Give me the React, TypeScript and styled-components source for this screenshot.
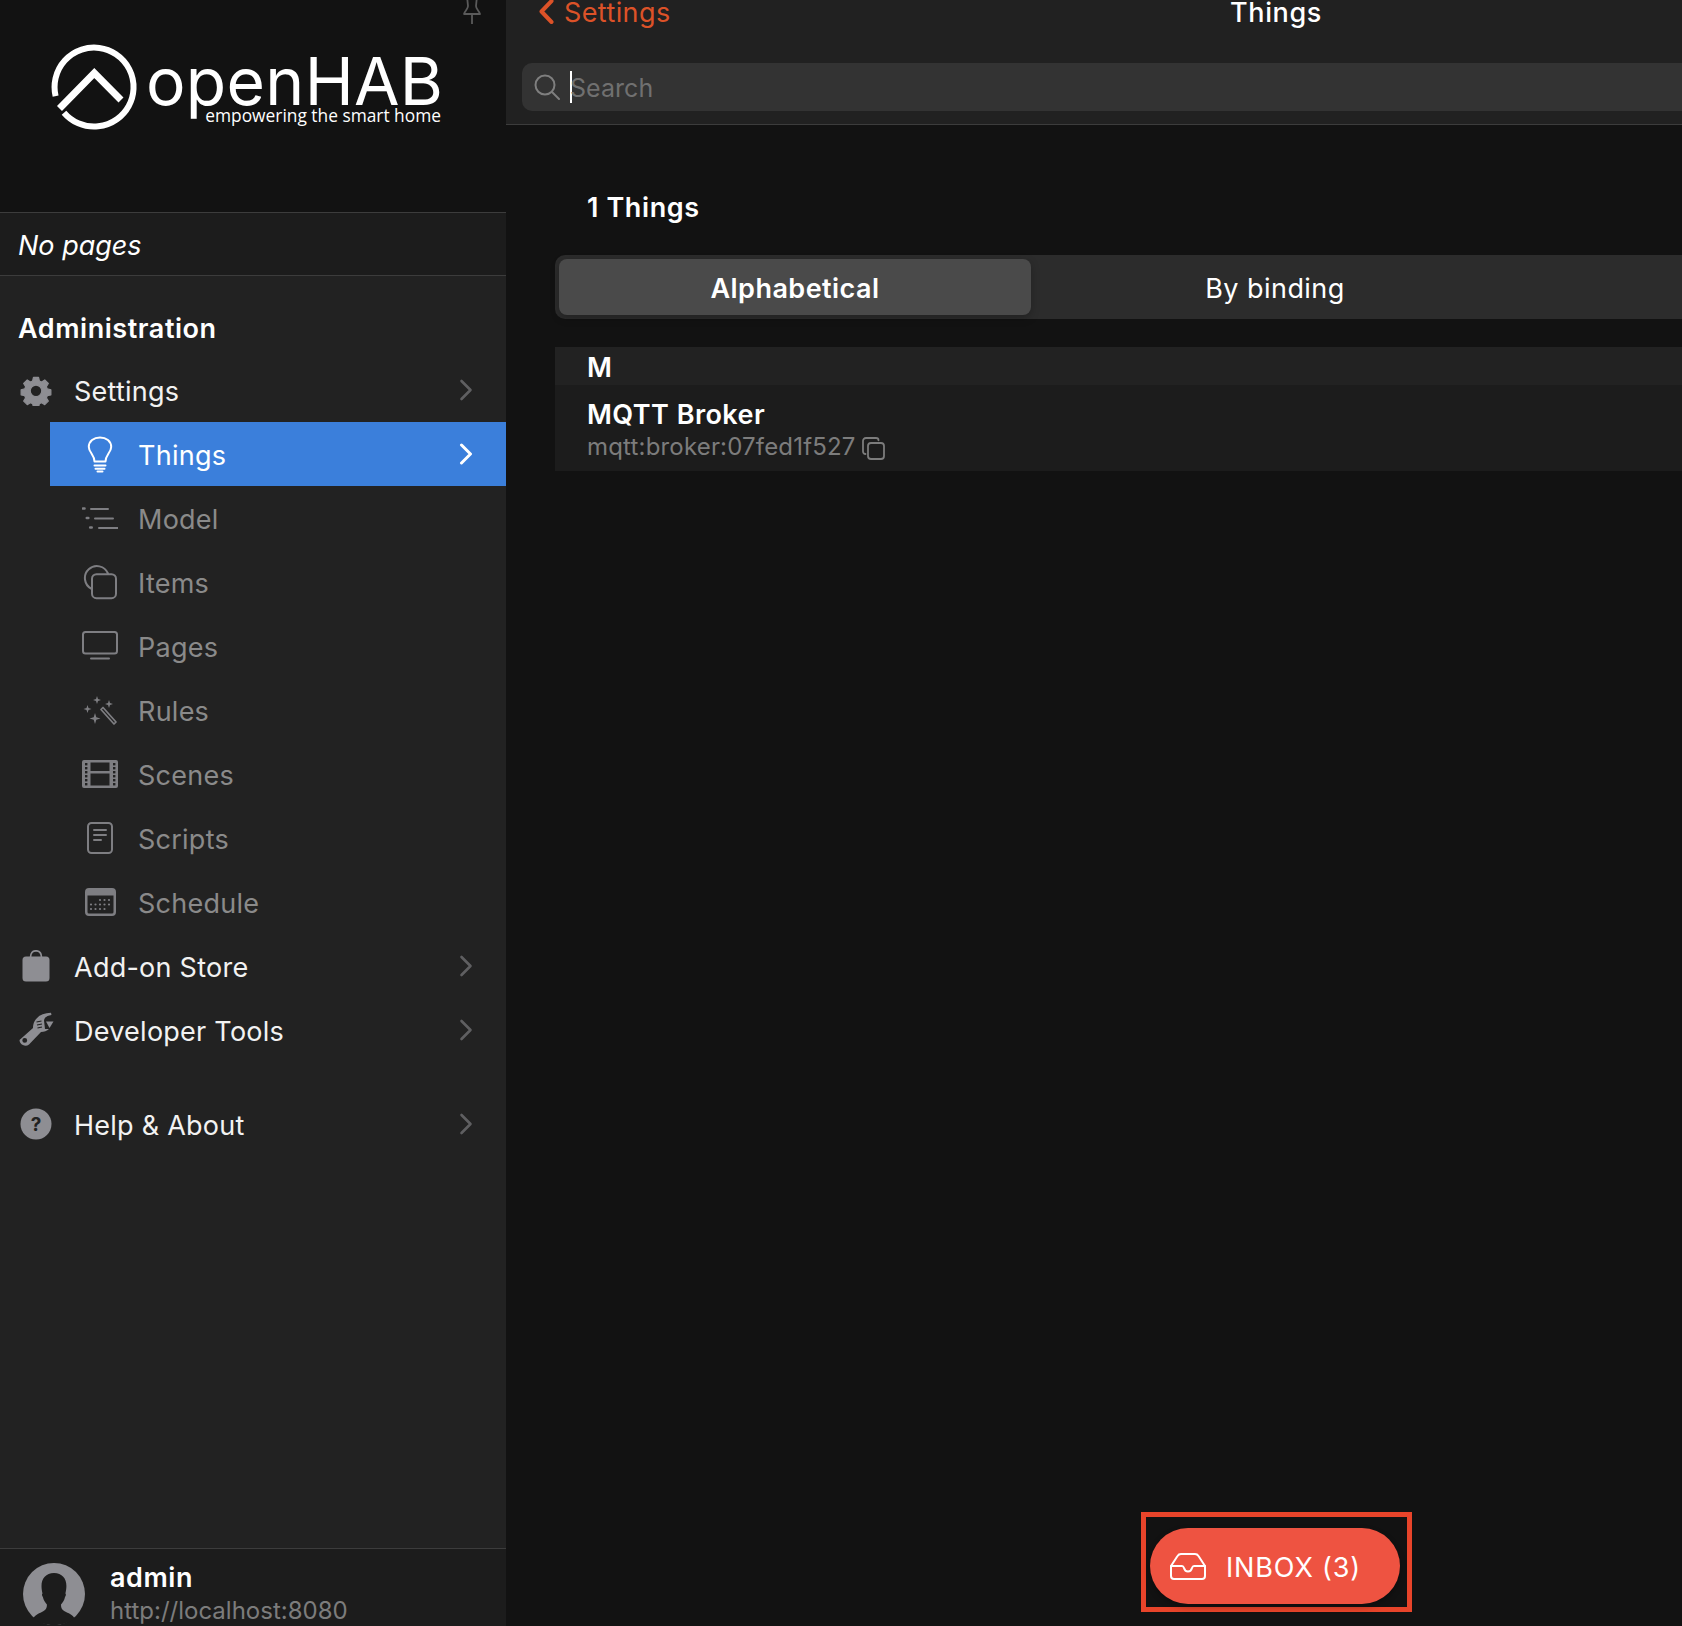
import React from 'react';
import styled, { createGlobalStyle } from 'styled-components';

const GlobalStyle = createGlobalStyle`
    html, body {
        margin: 0;
        padding: 0;
        background: #121212;
    }
    body {
        font-family: Inter, "Noto Sans", "Liberation Sans", sans-serif;
        color: #fff;
    }
`;

function Chevron({ active }: { active?: boolean }) {
    return (
        <ChevronIcon viewBox="0 0 14 22" $active={active}>
            <path d="M2.5 2 L11.5 11 L2.5 20" fill="none" stroke="currentColor" strokeWidth={active ? 3 : 2.6} strokeLinecap="round" strokeLinejoin="round" />
        </ChevronIcon>
    );
}

const outline = { fill: 'none', stroke: 'currentColor', strokeWidth: 2, strokeLinecap: 'round', strokeLinejoin: 'round' } as const;

const GearIcon = () => (
    <svg width="32" height="32" viewBox="0 0 32 32" fill="currentColor">
        <path fillRule="evenodd" d="M13 1.2h6l1 4.2 2.6 1.1 3.7-2.3 4.2 4.2-2.3 3.7 1.1 2.6 4.2 1v6l-4.2 1-1.1 2.6 2.3 3.7-4.2 4.2-3.7-2.3-2.6 1.1-1 4.2h-6l-1-4.2-2.6-1.1-3.7 2.3-4.2-4.2 2.3-3.7-1.1-2.6-4.2-1v-6l4.2-1 1.1-2.6-2.3-3.7 4.2-4.2 3.7 2.3 2.6-1.1zM16 10.200a6.800 6.800 0 1 0 0 13.600a6.800 6.800 0 0 0 0-13.600z" transform="translate(2.4 2.400) scale(.85)" stroke="currentColor" strokeWidth="1.400" strokeLinejoin="round" />
    </svg>
);

const BulbIcon = () => (
    <svg width="26" height="37" viewBox="0 0 26 37" {...outline}>
        <path d="M7.500 25.500c0-3.500-1.200-5.300-3-8C3 15.400 1.800 13.400 1.800 11 1.800 5.400 6.800 1.400 13 1.400S24.200 5.400 24.200 11c0 2.400-1.200 4.400-2.700 6.500-1.800 2.700-3 4.500-3 8z" />
        <path d="M7.500 29.500h11M8.500 32.800h9M10.500 35.600h5" />
    </svg>
);

const ModelIcon = () => (
    <svg width="36" height="24" viewBox="0 0 36 24" {...outline}>
        <path d="M9 3h17M13 12.500h18M17 22h19" />
        <path d="M1 2.500h1.500M4.800 12h1.500M8.200 21.500h1.500" strokeWidth={2.6} />
    </svg>
);

const ItemsIcon = () => (
    <svg width="36" height="36" viewBox="0 0 36 36" {...outline}>
        <path d="M9.500 24.800A12 12 0 1 1 26 9.500" />
        <rect x="10" y="10.200" width="24" height="24" rx="4.500" />
    </svg>
);

const PagesIcon = () => (
    <svg width="36" height="30" viewBox="0 0 36 30" {...outline}>
        <rect x="1" y="1" width="34" height="21.500" rx="2.500" />
        <path d="M9 27.500h18" />
    </svg>
);

const RulesIcon = () => (
    <svg width="34" height="32" viewBox="0 0 34 32">
        <path d="M14 2l1 3 3 1-3 1-1 3-1-3-3-1 3-1zM26 6l1 3 3 1-3 1-1 3-1-3-3-1 3-1zM4.500 11l1 3 3 1-3 1-1 3-1-3-3-1 3-1zM12 19l1.300 4.200 4.200 1.300-4.200 1.300-1.300 4.200-1.300-4.200-4.200-1.300 4.200-1.300z" fill="currentColor" />
        <path d="M18 15.500l2-2 13 14.500-2 2z" fill="none" stroke="currentColor" strokeWidth="1.700" strokeLinejoin="round" />
    </svg>
);

const ScenesIcon = () => {
    const holes: React.ReactNode[] = [];
    [3, 7, 11, 15, 19, 23].forEach(y => {
        [3, 31].forEach(x => {
            holes.push(<rect key={`${x}-${y}`} x={x} y={y} width="2.400" height="2.400" fill="#222" />);
        });
    });
    return (
        <svg width="36" height="28" viewBox="0 0 36 28">
            <path fillRule="evenodd" d="M2 0h32a2 2 0 0 1 2 2v24a2 2 0 0 1-2 2H2a2 2 0 0 1-2-2V2a2 2 0 0 1 2-2zM8.500 2.500v8.500h19V2.500zM8.500 13.500v12h19v-12z" fill="currentColor" />
            {holes}
        </svg>
    );
};

const ScriptsIcon = () => (
    <svg width="26" height="32" viewBox="0 0 26 32" {...outline}>
        <rect x="1" y="1" width="24" height="30" rx="3.500" />
        <path d="M7 8h12M7 13h12M7 18h7" />
    </svg>
);

const ScheduleIcon = () => {
    const dots: React.ReactNode[] = [];
    [12, 16.5, 21].forEach((y, r) => {
        [6, 10.5, 15, 19.5, 24].forEach((x, c) => {
            if ((r === 0 && c < 2) || (r === 2 && c > 3)) return;
            dots.push(<circle key={`${r}-${c}`} cx={x} cy={y} r="1.100" fill="currentColor" />);
        });
    });
    return (
        <svg width="31" height="28" viewBox="0 0 31 28">
            <path fillRule="evenodd" d="M4 0h23a4 4 0 0 1 4 4v20a4 4 0 0 1-4 4H4a4 4 0 0 1-4-4V4a4 4 0 0 1 4-4zM2.500 7.500v16.500a1.500 1.500 0 0 0 1.500 1.500h23a1.500 1.500 0 0 0 1.500-1.500V7.500z" fill="currentColor" />
            {dots}
        </svg>
    );
};

const StoreIcon = () => (
    <svg width="28" height="32" viewBox="0 0 28 32" fill="currentColor">
        <path d="M8.500 7.500C8.500 3 10.500.8 14 .8s5.500 2.200 5.500 6.700" fill="none" stroke="currentColor" strokeWidth="1.700" />
        <path d="M4 6.500h20a3.500 3.500 0 0 1 3.500 3.500v18a3.500 3.500 0 0 1-3.500 3.500H4A3.500 3.500 0 0 1 .5 28V10A3.500 3.500 0 0 1 4 6.500z" />
    </svg>
);

const WrenchIcon = () => (
    <svg width="36" height="36" viewBox="0 0 36 36" fill="currentColor">
        <path fillRule="evenodd" d="M1.500 28L15 16C15 8 21 1 33 .8L33.500 3C29 3.500 26.500 5.500 26 8.500L27 17L31 17C29 19 26 20 23 20L11 32.500A6 6 0 0 1 1.500 28zM6.700 26A2.400 2.400 0 1 0 6.800 30.800A2.400 2.400 0 0 0 6.700 26z" />
        <path d="M28 9.500h7.500L31.500 16z" />
        <path d="M18.500 10l5-1M19 13l5-1M19.500 16l4.500-1" stroke="#222" strokeWidth="1.200" fill="none" />
    </svg>
);

const HelpIcon = () => (
    <svg width="32" height="32" viewBox="0 0 32 32">
        <circle cx="16" cy="16" r="15.500" fill="currentColor" />
        <text x="16" y="22.500" textAnchor="middle" fontSize="19" fontWeight="700" fontFamily="Inter, sans-serif" fill="#222">?</text>
    </svg>
);

const SearchIcon = () => (
    <svg width="26" height="26" viewBox="0 0 26 26" fill="none" stroke="currentColor" strokeWidth="2" strokeLinecap="round">
        <circle cx="11" cy="11" r="9.500" />
        <path d="M18 18l7 7" />
    </svg>
);

const CopyIcon = () => (
    <svg width="23" height="23" viewBox="0 0 23 23" fill="none" stroke="currentColor" strokeWidth="1.800" strokeLinejoin="round" strokeLinecap="round">
        <path d="M3.500 17C2 17 1 16 1 14.500V4C1 2.200 2.200 1 4 1h10c1.500 0 2.500 1 2.500 2.300" />
        <rect x="6" y="6" width="16" height="16" rx="3" />
    </svg>
);

const InboxIcon = () => (
    <svg width="36" height="27" viewBox="0 0 36 27" fill="none" stroke="currentColor" strokeWidth="2" strokeLinejoin="round" strokeLinecap="round">
        <path d="M1 13L7.500 3c.8-1.300 1.800-2 3.500-2h14c1.700 0 2.700.7 3.500 2L35 13v10c0 2-1.300 3-3 3H4c-1.700 0-3-1-3-3z" />
        <path d="M1 13h11c1 0 1.500.5 2 2 .5 2 2 3.500 4 3.500s3.500-1.500 4-3.500c.5-1.500 1-2 2-2h11" />
    </svg>
);

const AvatarIcon = () => (
    <svg width="62" height="62" viewBox="0 0 62 62">
        <circle cx="31" cy="31" r="31" fill="#8e8e93" />
        <path d="M31 10c-8 0-12.500 5.500-12.500 13 0 3 .6 5.500 1 7.500-.8.5-.6 2.500.4 3.500.5 3 2.500 6 4 7.500 0 4-1 5.500-5 7.500-4 2-7 3-8.500 6.500C15 59.500 22.500 62 31 62s16-2.500 20.500-6.500c-1.500-3.500-4.500-4.500-8.500-6.500s-5-3.500-5-7.500c1.500-1.500 3.500-4.500 4-7.500 1-1 1.200-3 .4-3.500.4-2 1-4.500 1-7.500C43.500 15.500 39 10 31 10z" fill="#1c1c1c" />
    </svg>
);

const adminItems = [
    { label: 'Model', icon: <ModelIcon /> },
    { label: 'Items', icon: <ItemsIcon /> },
    { label: 'Pages', icon: <PagesIcon /> },
    { label: 'Rules', icon: <RulesIcon /> },
    { label: 'Scenes', icon: <ScenesIcon /> },
    { label: 'Scripts', icon: <ScriptsIcon /> },
    { label: 'Schedule', icon: <ScheduleIcon /> },
];

function App() {
    return (
        <Page>
            <GlobalStyle />
            <Sidebar>
                <LogoPanel>
                    <PinIcon viewBox="0 0 18 25" fill="none" stroke="currentColor" strokeWidth="1.800" strokeLinejoin="round">
                        <path d="M4-4l1 10c0 3-3 5-4 8h16c-1-3-4-5-4-8l1-10zM9 14v10" />
                    </PinIcon>
                    <Logo>
                        <svg width="92" height="92" viewBox="0 0 92 92" fill="none" stroke="#fff" strokeWidth="6">
                            <path d="M17 71.700A39.500 39.500 0 1 0 8.600 55.100" />
                            <path d="M12.500 67.500L47.300 32 74 59" strokeWidth="7" />
                        </svg>
                        <LogoText>
                            <LogoName>openHAB</LogoName>
                            <LogoTag>empowering the smart home</LogoTag>
                        </LogoText>
                    </Logo>
                </LogoPanel>
                <PagesPanel>No pages</PagesPanel>
                <Menu>
                    <MenuTitle>Administration</MenuTitle>
                    <MenuRow>
                        <MainIcon><GearIcon /></MainIcon>
                        <MenuLabel>Settings</MenuLabel>
                        <Chevron />
                    </MenuRow>
                    <SubRow $active>
                        <SubIcon $active><BulbIcon /></SubIcon>
                        <MenuLabel>Things</MenuLabel>
                        <Chevron active />
                    </SubRow>
                    {adminItems.map(item => (
                        <SubRow key={item.label}>
                            <SubIcon>{item.icon}</SubIcon>
                            <MenuLabel>{item.label}</MenuLabel>
                        </SubRow>
                    ))}
                    <MenuRow>
                        <MainIcon><StoreIcon /></MainIcon>
                        <MenuLabel>Add-on Store</MenuLabel>
                        <Chevron />
                    </MenuRow>
                    <MenuRow>
                        <MainIcon><WrenchIcon /></MainIcon>
                        <MenuLabel>Developer Tools</MenuLabel>
                        <Chevron />
                    </MenuRow>
                    <HelpGroup>
                        <MenuRow>
                            <MainIcon><HelpIcon /></MainIcon>
                            <MenuLabel>Help &amp; About</MenuLabel>
                            <Chevron />
                        </MenuRow>
                    </HelpGroup>
                </Menu>
                <UserPanel>
                    <AvatarIcon />
                    <UserText>
                        <UserName>admin</UserName>
                        <UserUrl>http://localhost:8080</UserUrl>
                    </UserText>
                </UserPanel>
            </Sidebar>
            <Main>
                <MainInner>
                    <Header>
                        <NavRow>
                            <BackLink>
                                <svg width="15" height="26" viewBox="0 0 15 26" fill="none" stroke="currentColor" strokeWidth="4" strokeLinecap="round" strokeLinejoin="round">
                                    <path d="M12.500 2L2.500 12.500 12.500 23" />
                                </svg>
                                Settings
                            </BackLink>
                            <NavTitle>Things</NavTitle>
                        </NavRow>
                        <SearchBox>
                            <SearchGlyph><SearchIcon /></SearchGlyph>
                            <Caret />
                            <SearchHint>Search</SearchHint>
                        </SearchBox>
                    </Header>
                    <Content>
                        <CountTitle>1 Things</CountTitle>
                        <Segmented>
                            <Segment $active>Alphabetical</Segment>
                            <Segment>By binding</Segment>
                        </Segmented>
                        <ListGroup>M</ListGroup>
                        <ListItem>
                            <ItemTitle>MQTT Broker</ItemTitle>
                            <ItemSub>mqtt:broker:07fed1f527 <CopyIcon /></ItemSub>
                        </ListItem>
                    </Content>
                    <Highlight>
                        <InboxButton>
                            <InboxIcon />
                            <InboxLabel>INBOX (3)</InboxLabel>
                        </InboxButton>
                    </Highlight>
                </MainInner>
            </Main>
        </Page>
    );
}

const Page = styled.div`
    display: flex;
    width: 1682px;
    height: 1626px;
    overflow: hidden;
    background: #121212;
`;

const Sidebar = styled.aside`
    flex: 0 0 506px;
    display: flex;
    flex-direction: column;
    background: #222222;
`;

const LogoPanel = styled.div`
    position: relative;
    height: 212px;
    background: #121212;
    border-bottom: 1px solid #3c3c3c;
    box-sizing: content-box;
`;

const PinIcon = styled.svg`
    position: absolute;
    top: 0;
    left: 463px;
    width: 18px;
    height: 25px;
    color: #5a5a5a;
`;

const Logo = styled.div`
    display: flex;
    padding: 41px 0 0 47px;
    gap: 7px;
`;

const LogoText = styled.div`
    display: flex;
    flex-direction: column;
    align-items: flex-end;
    width: 295px;
    margin-top: 15px;
`;

const LogoName = styled.div`
    align-self: flex-start;
    font-family: Inter, sans-serif;
    font-size: 66px;
    line-height: 50px;
    letter-spacing: 0.3px;
    font-weight: 400;
    white-space: nowrap;
`;

const LogoTag = styled.div`
    margin-top: -2px;
    font-family: "Open Sans", sans-serif;
    font-size: 17.35px;
    line-height: 22px;
    white-space: nowrap;
`;

const PagesPanel = styled.div`
    height: 62px;
    padding-left: 18px;
    font-size: 27px;
    font-style: italic;
    line-height: 65px;
    background: #1c1c1c;
    border-bottom: 1px solid #3c3c3c;
`;

const Menu = styled.nav`
    flex: 1;
    display: flex;
    flex-direction: column;
`;

const MenuTitle = styled.h2`
    margin: 0;
    height: 82px;
    padding: 33px 0 0 18px;
    box-sizing: border-box;
    font-size: 27px;
    line-height: 40px;
    font-weight: 600;
    letter-spacing: 0.55px;
`;

const MenuRow = styled.div`
    display: flex;
    align-items: center;
    flex: 0 0 64px;
    height: 64px;
    padding-right: 33px;
    color: #f2f2f2;
`;

const SubRow = styled.div<{ $active?: boolean }>`
    display: flex;
    align-items: center;
    flex: 0 0 64px;
    height: 64px;
    margin-left: 50px;
    padding-right: 33px;
    background: ${props => props.$active ? '#3b7fdb' : 'transparent'};
    color: ${props => props.$active ? '#ffffff' : '#8a8a8a'};
`;

const MainIcon = styled.span`
    display: flex;
    justify-content: center;
    align-items: center;
    flex: 0 0 36px;
    margin: 0 20px 0 18px;
    color: #8e8e93;
`;

const SubIcon = styled.span<{ $active?: boolean }>`
    display: flex;
    justify-content: center;
    align-items: center;
    flex: 0 0 40px;
    margin: 0 18px 0 30px;
    color: ${props => props.$active ? '#ffffff' : '#7e7e82'};
`;

const MenuLabel = styled.span`
    flex: 1;
    padding-top: 3px;
    font-size: 27px;
    line-height: 40px;
    letter-spacing: 0.25px;
`;

const ChevronIcon = styled.svg<{ $active?: boolean }>`
    flex: none;
    width: 14px;
    height: 22px;
    margin-top: -1px;
    color: ${props => props.$active ? '#ffffff' : '#5f5f61'};
`;

const HelpGroup = styled.div`
    margin-top: 30px;
`;

const UserPanel = styled.div`
    display: flex;
    align-items: flex-start;
    height: 78px;
    padding: 14px 0 0 23px;
    box-sizing: border-box;
    gap: 25px;
    background: #1c1c1c;
    border-top: 1px solid #3c3c3c;
    overflow: hidden;
`;

const UserText = styled.div`
    display: flex;
    flex-direction: column;
`;

const UserName = styled.span`
    font-size: 27px;
    font-weight: 600;
    line-height: 30px;
    letter-spacing: 0.55px;
`;

const UserUrl = styled.span`
    margin-top: 2px;
    font-size: 24px;
    line-height: 32px;
    color: #7c7c7c;
`;

const Main = styled.main`
    flex: 1;
    min-width: 0;
    overflow: hidden;
`;

const MainInner = styled.div`
    position: relative;
    width: 1540px;
    height: 1626px;
`;

const Header = styled.header`
    height: 124px;
    background: #212121;
    border-bottom: 1px solid #3c3c3c;
`;

const NavRow = styled.div`
    position: relative;
    display: flex;
    align-items: center;
    height: 63px;
    padding: 0 0 39px 33px;
    box-sizing: border-box;
`;

const BackLink = styled.span`
    display: flex;
    align-items: center;
    gap: 10px;
    height: 24px;
    font-size: 27px;
    letter-spacing: 0.4px;
    color: #dc5228;
`;

const NavTitle = styled.span`
    position: absolute;
    top: -2px;
    left: 0;
    right: 0;
    text-align: center;
    font-size: 27px;
    line-height: 30px;
    font-weight: 500;
    letter-spacing: 0.6px;
`;

const SearchBox = styled.div`
    display: flex;
    align-items: center;
    height: 48px;
    margin-left: 16px;
    padding-left: 12px;
    background: #333333;
    border-radius: 10px;
`;

const SearchGlyph = styled.span`
    display: flex;
    color: #7f7f7f;
    margin-right: 10px;
`;

const Caret = styled.span`
    width: 2px;
    height: 32px;
    background: #ffffff;
`;

const SearchHint = styled.span`
    margin-left: -2px;
    padding-top: 2px;
    font-size: 25px;
    letter-spacing: 0.05px;
    color: #707070;
`;

const Content = styled.section`
    padding: 63px 0 0 49px;
`;

const CountTitle = styled.h3`
    margin: 0 0 27px 32px;
    font-size: 27px;
    line-height: 40px;
    font-weight: 600;
    letter-spacing: 0.6px;
`;

const Segmented = styled.div`
    display: grid;
    grid-template-columns: repeat(3, 480px);
    height: 64px;
    padding: 4px;
    box-sizing: border-box;
    background: #2c2c2c;
    border-radius: 10px 0 0 10px;
`;

const Segment = styled.div<{ $active?: boolean }>`
    display: flex;
    align-items: center;
    justify-content: center;
    width: 472px;
    padding-top: 2px;
    box-sizing: border-box;
    font-size: 27px;
    font-weight: ${props => props.$active ? 600 : 400};
    letter-spacing: 0.45px;
    background: ${props => props.$active ? '#4a4a4a' : 'transparent'};
    border-radius: 8px;
    box-shadow: ${props => props.$active ? '0 3px 8px rgba(0,0,0,.25)' : 'none'};
`;

const ListGroup = styled.div`
    height: 38px;
    margin-top: 28px;
    padding-left: 32px;
    font-size: 27px;
    line-height: 41px;
    font-weight: 600;
    background: #222222;
`;

const ListItem = styled.div`
    height: 86px;
    padding: 13px 0 0 32px;
    box-sizing: border-box;
    background: #1c1c1c;
`;

const ItemTitle = styled.div`
    font-size: 27px;
    line-height: 33px;
    font-weight: 600;
    letter-spacing: 0.45px;
`;

const ItemSub = styled.div`
    display: flex;
    align-items: center;
    gap: 6px;
    font-size: 24px;
    line-height: 32px;
    letter-spacing: 0.18px;
    color: #7c7c7c;
    svg {
        margin-top: 3px;
    }
`;

const Highlight = styled.div`
    position: absolute;
    left: 635px;
    bottom: 14px;
    width: 271px;
    height: 100px;
    padding: 11px 0 0 4px;
    box-sizing: border-box;
    border: 5px solid #e8442a;
`;

const InboxButton = styled.div`
    display: flex;
    align-items: center;
    width: 250px;
    height: 76px;
    padding-left: 20px;
    box-sizing: border-box;
    gap: 20px;
    border-radius: 38px;
    background: #ee5341;
    box-shadow: 0 3px 6px rgba(0,0,0,.3);
`;

const InboxLabel = styled.span`
    padding-top: 2px;
    font-size: 27px;
    letter-spacing: 0.85px;
`;

export default App;
